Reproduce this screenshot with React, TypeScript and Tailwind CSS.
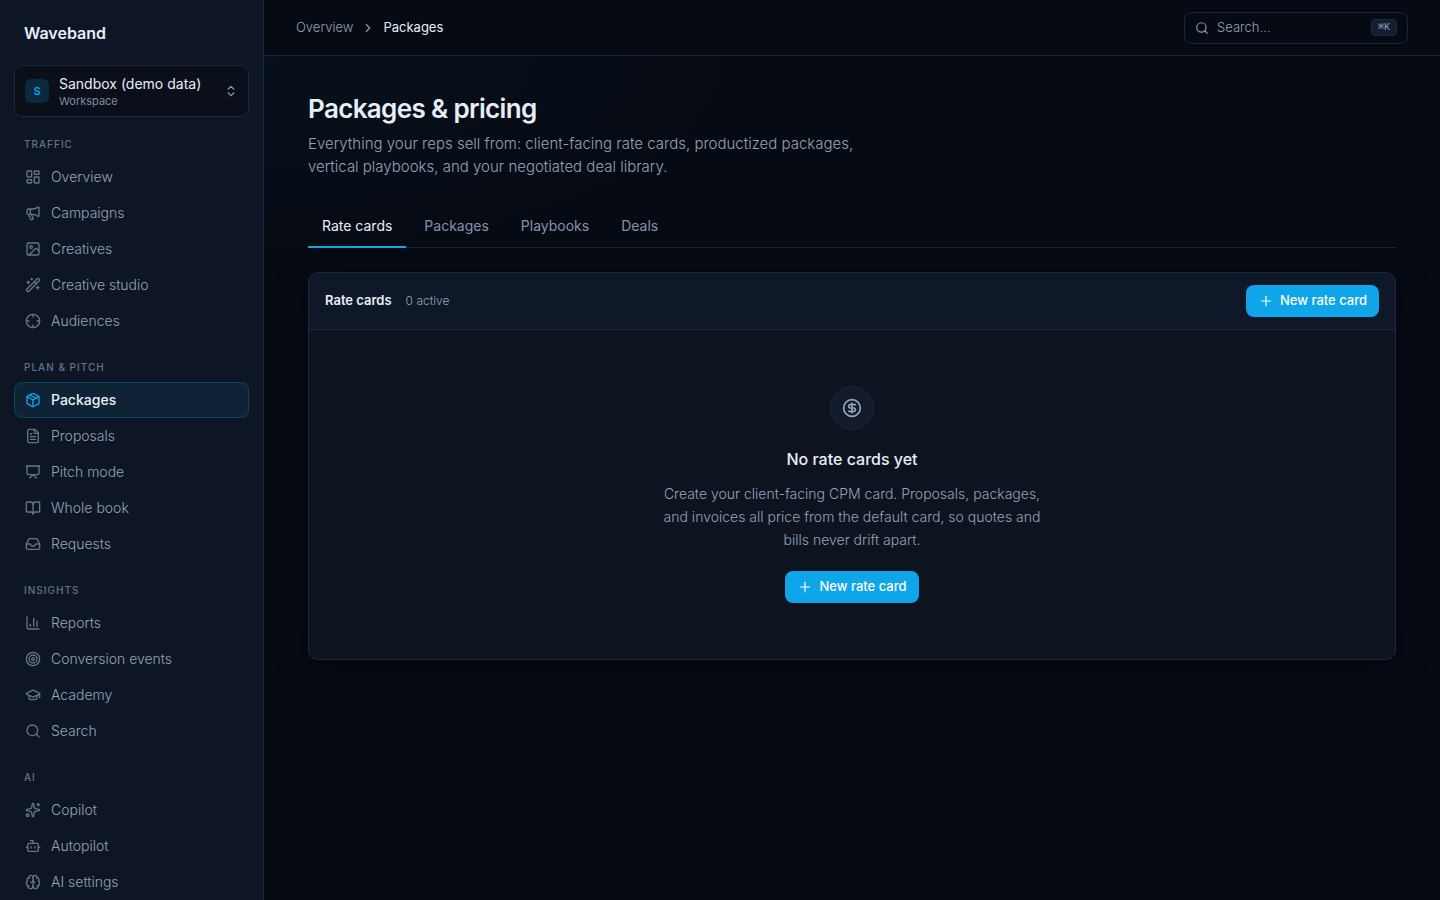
import { useState } from 'react';
import {
    BookOpen,
    Bot,
    Brain,
    ChartColumn,
    ChevronRight,
    ChevronsUpDown,
    CircleDollarSign,
    Crosshair,
    FileText,
    GraduationCap,
    Image,
    Inbox,
    LayoutDashboard,
    Megaphone,
    Package,
    Plus,
    Presentation,
    Search,
    Sparkles,
    Target,
    WandSparkles,
    type LucideIcon
} from 'lucide-react';
import clsx from 'clsx';

type NavItem = { label: string; icon: LucideIcon };
type NavSection = { title: string; items: NavItem[] };

const sections: NavSection[] = [
    {
        title: 'Traffic',
        items: [
            { label: 'Overview', icon: LayoutDashboard },
            { label: 'Campaigns', icon: Megaphone },
            { label: 'Creatives', icon: Image },
            { label: 'Creative studio', icon: WandSparkles },
            { label: 'Audiences', icon: Crosshair }
        ]
    },
    {
        title: 'Plan & pitch',
        items: [
            { label: 'Packages', icon: Package },
            { label: 'Proposals', icon: FileText },
            { label: 'Pitch mode', icon: Presentation },
            { label: 'Whole book', icon: BookOpen },
            { label: 'Requests', icon: Inbox }
        ]
    },
    {
        title: 'Insights',
        items: [
            { label: 'Reports', icon: ChartColumn },
            { label: 'Conversion events', icon: Target },
            { label: 'Academy', icon: GraduationCap },
            { label: 'Search', icon: Search }
        ]
    },
    {
        title: 'AI',
        items: [
            { label: 'Copilot', icon: Sparkles },
            { label: 'Autopilot', icon: Bot },
            { label: 'AI settings', icon: Brain }
        ]
    }
];

const tabs = ['Rate cards', 'Packages', 'Playbooks', 'Deals'];

function Sidebar() {
    return (
        <aside className="sticky top-0 flex h-screen w-[264px] shrink-0 flex-col overflow-hidden border-r border-[#1b2940] bg-[#0e1625] px-3.5">
            <div className="flex h-[65px] shrink-0 items-center px-2.5">
                <span className="text-base font-semibold text-[#e8eef8]">Waveband</span>
            </div>

            <button
                type="button"
                className="flex h-[52px] shrink-0 items-center gap-2.5 rounded-lg border border-[#1b2940] bg-[#0a0f1a] px-2.5 text-left"
            >
                <span className="flex size-6 items-center justify-center rounded-md bg-[#0b2a3d] text-[11px] font-semibold text-[#0ea5e9]">
                    S
                </span>
                <span className="flex flex-1 flex-col pt-0.5">
                    <span className="text-sm leading-[18px] text-[#e8eef8]">Sandbox (demo data)</span>
                    <span className="text-[11px] leading-4 text-[#7c8aa5]">Workspace</span>
                </span>
                <ChevronsUpDown className="size-3.5 text-[#8b98b0]" />
            </button>

            <nav className="mt-[19px] flex flex-col gap-5">
                {sections.map((section) => (
                    <div key={section.title}>
                        <h2 className="mb-[7px] px-2.5 text-[10px] leading-4 font-medium tracking-widest text-[#64728c] uppercase">
                            {section.title}
                        </h2>
                        {section.items.map(({ label, icon: Icon }) => {
                            const active = label === 'Packages';
                            return (
                                <a
                                    key={label}
                                    href="#"
                                    aria-current={active ? 'page' : undefined}
                                    className={clsx(
                                        'flex h-9 items-center gap-2.5 rounded-lg border px-2.5 text-sm',
                                        active
                                            ? 'border-[#0c4465] bg-[#0e2436] font-medium text-[#e8eef8]'
                                            : 'border-transparent font-light text-[#94a3b8]'
                                    )}
                                >
                                    <Icon
                                        strokeWidth={2}
                                        className={clsx('size-4', active ? 'text-[#0ea5e9]' : 'text-[#64748b]')}
                                    />
                                    {label}
                                </a>
                            );
                        })}
                    </div>
                ))}
            </nav>
        </aside>
    );
}

function Topbar() {
    return (
        <header className="flex h-14 items-center justify-between border-b border-[#1a2438] bg-[#060a13] px-8">
            <nav aria-label="Breadcrumb" className="flex items-center gap-2 text-[13px]">
                <a href="#" className="font-light text-[#94a3b8]">
                    Overview
                </a>
                <ChevronRight className="size-3.5 text-[#8b98b0]" />
                <span className="text-[#e8eef8]">Packages</span>
            </nav>

            <label className="flex h-8 w-56 items-center gap-2 rounded-lg border border-[#1b2940] px-2.5">
                <Search className="size-3.5 shrink-0 text-[#8b98b0]" />
                <input
                    type="search"
                    aria-label="Search"
                    placeholder="Search…"
                    className="min-w-0 flex-1 bg-transparent text-[13px] font-light text-[#e8eef8] outline-none placeholder:text-[#94a3b8]"
                />
                <kbd className="flex h-[17px] items-center rounded-sm border border-[#1b2940] bg-[#141d31] px-1.5 font-['Liberation_Mono',monospace] text-[10px] text-[#94a3b8]">
                    ⌘K
                </kbd>
            </label>
        </header>
    );
}

function NewRateCardButton() {
    return (
        <button
            type="button"
            className="flex h-8 items-center gap-1.5 rounded-lg bg-[#0ea5e9] px-3 text-[13px] font-medium text-white"
        >
            <Plus strokeWidth={1.75} className="size-4" />
            New rate card
        </button>
    );
}

export default function App() {
    const [activeTab, setActiveTab] = useState('Rate cards');

    return (
        <div className="flex min-h-screen bg-[#060a13] font-['Inter',sans-serif] text-[#e8eef8]">
            <Sidebar />

            <div className="flex min-w-0 flex-1 flex-col">
                <Topbar />

                <main className="flex-1 bg-[radial-gradient(ellipse_480px_200px_at_0%_0%,#07111b,transparent)] px-11 pt-9 pb-12">
                    <h1 className="text-[26px] leading-[34px] font-semibold tracking-tight">Packages &amp; pricing</h1>
                    <p className="mt-1.5 max-w-[560px] text-[15px] leading-[23px] font-light text-[#94a3b8]">
                        Everything your reps sell from: client-facing rate cards, productized packages, vertical
                        playbooks, and your negotiated deal library.
                    </p>

                    <div role="tablist" className="mt-7 flex gap-1 border-b border-[#1a2438]">
                        {tabs.map((tab) => (
                            <button
                                key={tab}
                                type="button"
                                role="tab"
                                aria-selected={tab === activeTab}
                                onClick={() => setActiveTab(tab)}
                                className={clsx(
                                    '-mb-px h-[42px] border-b-2 px-3.5 text-sm',
                                    tab === activeTab
                                        ? 'border-[#0ea5e9] text-[#e8eef8]'
                                        : 'border-transparent text-[#8592ab]'
                                )}
                            >
                                {tab}
                            </button>
                        ))}
                    </div>

                    <section className="mt-6 overflow-hidden rounded-[10px] border border-[#1b2940] bg-[#0d1420] shadow-[0_8px_32px_rgba(0,0,0,0.4)]">
                        <div className="flex h-[57px] items-center justify-between border-b border-[#1b2940] bg-[#0f1828] px-4">
                            <div className="flex items-center gap-3.5">
                                <h2 className="text-[13px] font-semibold">Rate cards</h2>
                                <span className="text-xs font-light text-[#94a3b8]">0 active</span>
                            </div>
                            <NewRateCardButton />
                        </div>

                        <div className="flex flex-col items-center px-6 py-14 text-center">
                            <div className="flex size-11 items-center justify-center rounded-full border border-[#1a2639] bg-[#121a2b]">
                                <CircleDollarSign className="size-5 text-[#94a3b8]" />
                            </div>
                            <h3 className="mt-4 text-base leading-[26px] font-medium">No rate cards yet</h3>
                            <p className="mt-2.5 mb-5 max-w-[384px] text-sm leading-[23px] font-light text-[#94a3b8]">
                                Create your client-facing CPM card. Proposals, packages, and invoices all price from
                                the default card, so quotes and bills never drift apart.
                            </p>
                            <NewRateCardButton />
                        </div>
                    </section>
                </main>
            </div>
        </div>
    );
}
